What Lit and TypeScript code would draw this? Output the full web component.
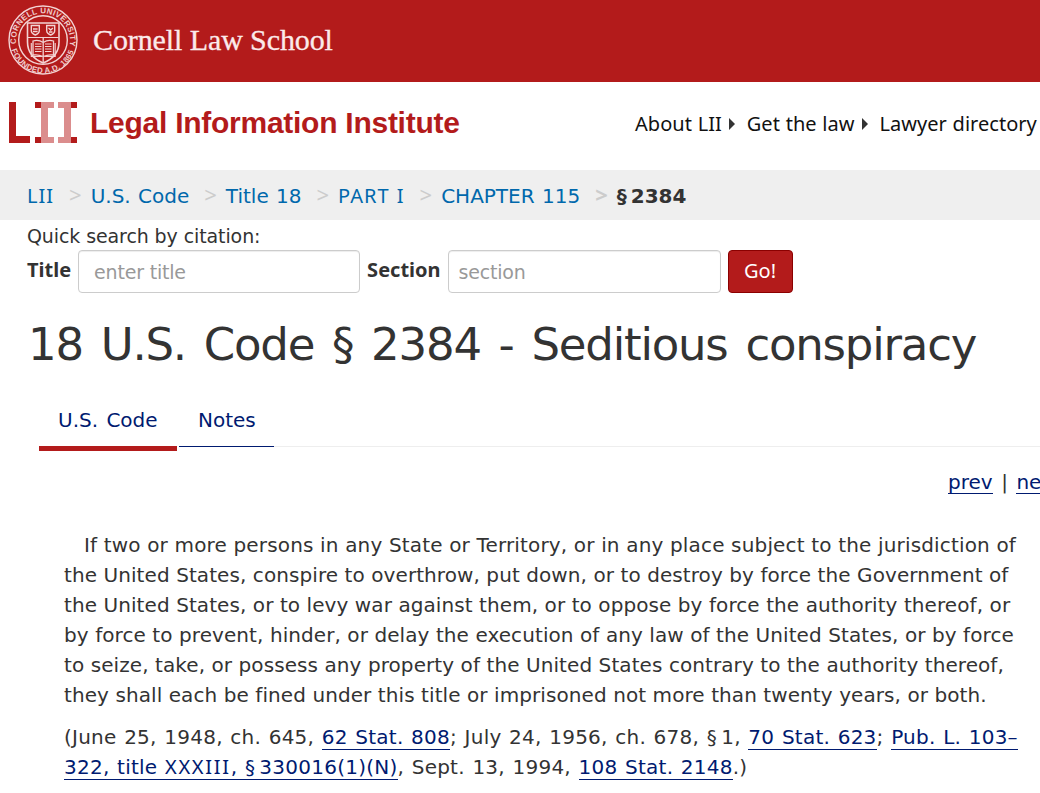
import { LitElement, html, css, svg } from 'lit'
import { customElement, property } from 'lit/decorators.js';

/**
 * @element cornell-seal
 * @summary Round university seal with shield and open book.
 */
@customElement('cornell-seal')
export class CornellSeal extends LitElement {
  static override styles = css`
    :host {
      display: block;
      width: 70px;
      height: 70px;
    }
    svg {
      display: block;
    }
    .line {
      fill: none;
      stroke: #f3d3d3;
    }
    .ring-text {
      fill: #f0cccc;
      font: bold 8px 'Liberation Sans', sans-serif;
    }
  `;

  override render() {
    const rows = [41.5, 44, 46.5, 49];
    return html`
      <svg width="70" height="70" viewBox="0 0 70 70" role="img" aria-label="Cornell University seal">
        <defs>
          <path id="top" d="M8.6 41 A27 27 0 1 1 61.4 41" />
          <path id="bottom" d="M2.5 41 A33 33 0 0 0 67.5 41" />
        </defs>
        <circle class="line" cx="35" cy="35" r="34" stroke-width="1.4" />
        <circle class="line" cx="35" cy="35" r="24.3" stroke-width="1.4" />
        <text class="ring-text"><textPath href="#top" textLength="94" startOffset="2">CORNELL UNIVERSITY</textPath></text>
        <text class="ring-text"><textPath href="#bottom" textLength="82" startOffset="4">FOUNDED A.D. 1865</textPath></text>
        <path class="line" stroke-width="1.6" d="M19.5 18 H51 V37 C51 47 45 54 35.2 58 C25.5 54 19.5 47 19.5 37 Z" />
        <path class="line" stroke-width="1" d="M20 32.5 H50.5" />
        <path class="line" stroke-width="1.4" d="M23.3 20.5 h8 v5 q0 3 -4 4.5 q-4 -1.5 -4 -4.5 z M38.7 20.5 h8 v5 q0 3 -4 4.5 q-4 -1.5 -4 -4.5 z" />
        <path class="line" stroke-width="1.3" d="M25 24 h4.6 M25 26.5 h4.6 M40.5 23 l2.2 2 l2.2 -2 M41 27 h3.5" />
        <path class="line" stroke-width="1.3" d="M35.2 37.5 C31.5 35 28 35 25 36 V50 C29 49.5 32 50 35.2 51.5 C38.5 50 42 49.5 45.5 50 V36 C42 35 39 35 35.2 37.5 Z M35.2 32.5 V57.5" />
        ${rows.map(y => svg`<path class="line" stroke-width="1" d=${`M27 ${y - 2.5} H33.5 M37 ${y - 2.5} H43.5`} />`)}
        <path class="line" stroke-width="1.1" d="M23.3 38 V51.5 H34 M47.2 38 V51.5 H36.5" />
      </svg>
    `;
  }
}

/**
 * @element crumb-trail
 * @summary Breadcrumb bar. The last entry is the current page.
 */
@customElement('crumb-trail')
export class CrumbTrail extends LitElement {
  @property({ attribute: false }) items: string[] = [];
  @property({ type: String }) current = '';

  static override styles = css`
    :host {
      display: block;
      background: #efefef;
    }
    nav {
      display: flex;
      align-items: baseline;
      height: 50px;
      padding: 9px 0 0 27px;
      box-sizing: border-box;
      font: 20px/30px 'DejaVu Sans', sans-serif;
      white-space: nowrap;
    }
    a {
      color: #0068ac;
      text-decoration: none;
      word-spacing: 1px;
    }
    .roman {
      font-family: 'Noto Sans', sans-serif;
      letter-spacing: 1px;
    }
    .sep {
      width: 36.6px;
      padding-left: 15px;
      box-sizing: border-box;
      color: #ccc;
      font-family: 'Noto Sans', sans-serif;
      font-size: 22px;
    }
    .current {
      color: #333;
      font-weight: bold;
      letter-spacing: 0.4px;
    }
    .sep.last {
      font-weight: bold;
    }
  `;

  override render() {
    return html`
      <nav aria-label="Breadcrumb">
        ${this.items.map((item, i) => html`
          <a class=${item.endsWith('I') ? 'roman' : ''} href="#">${item}</a>
          <span class=${i === this.items.length - 1 ? 'sep last' : 'sep'}>&gt;</span>
        `)}
        <span class="current">${this.current}</span>
      </nav>
    `;
  }
}

@customElement('app-root')
export class AppRoot extends LitElement {
  static override styles = css`
    :host {
      display: block;
      height: 793px;
      overflow: hidden;
      background: #fff;
      color: #333;
      font-family: 'DejaVu Sans', sans-serif;
      font-size: 20px;
      line-height: 30px;
    }
    a {
      color: #001a70;
      text-decoration: none;
    }

    /* ── Header ── */
    .school {
      display: flex;
      align-items: center;
      gap: 15px;
      height: 82px;
      padding: 0 8px 2px;
      box-sizing: border-box;
      background: #b31b1b;
    }
    .school-name {
      color: #fbeaea;
      font: 30px/40px 'Liberation Serif', serif;
      letter-spacing: -0.1px;
      white-space: nowrap;
      -webkit-text-stroke: 0.3px #fbeaea;
    }
    .masthead {
      display: flex;
      align-items: center;
      height: 88px;
      padding-left: 9px;
      white-space: nowrap;
    }
    .lii {
      flex: none;
      margin: 0 12px 8px 0;
    }
    .institute {
      width: 370px;
      margin-bottom: 6px;
      color: #b31b1b;
      font: bold 30px/40px 'Liberation Sans', sans-serif;
      letter-spacing: -0.26px;
    }
    .menu {
      display: flex;
      align-items: center;
      margin: 0 0 4px 175px;
      color: #111;
      font-family: 'Noto Sans', sans-serif;
      letter-spacing: 0.03px;
      word-spacing: 0.5px;
    }
    .arrow {
      margin: 0 12px 0 7px;
      border: 6px solid transparent;
      border-left: 6px solid #333;
      border-right: 0;
    }

    /* ── Citation search ── */
    .search {
      padding-left: 27px;
    }
    .hint {
      padding-top: 1px;
      height: 29px;
      font-size: 19px;
      letter-spacing: -0.1px;
    }
    .search-row {
      display: flex;
      height: 43px;
    }
    label {
      padding-top: 4px;
      font-family: 'Noto Sans', sans-serif;
      font-weight: bold;
      line-height: 32px;
    }
    input {
      box-sizing: border-box;
      height: 43px;
      border: 1px solid #ccc;
      border-radius: 4px;
      margin: 0 7px 0 7px;
      font: 19px 'DejaVu Sans', sans-serif;
      letter-spacing: -0.2px;
      box-shadow: inset 0 1px 1px rgba(0, 0, 0, 0.075);
    }
    input::placeholder {
      color: #999;
    }
    .title-input {
      width: 282px;
      padding: 0 15px;
    }
    .section-input {
      width: 273px;
      padding: 0 10px;
    }
    button {
      width: 65px;
      height: 43px;
      padding: 0 0 2px;
      border: 1px solid #8b0000;
      border-radius: 4px;
      background: #b31b1b;
      color: #fff;
      font: 20px 'Noto Sans', sans-serif;
    }

    /* ── Section heading and tabs ── */
    h1 {
      margin: 21px 0 0 28px;
      font-size: 45px;
      font-weight: normal;
      letter-spacing: -1.2px;
      word-spacing: 4.7px;
      line-height: 62px;
      white-space: nowrap;
    }
    .tabs {
      display: flex;
      height: 56px;
      margin: 19px 0 0 39px;
    }
    .tab {
      box-sizing: border-box;
      width: 95px;
      height: 52px;
      padding: 10px 0 0 19px;
      border-bottom: 1px solid #001a70;
      word-spacing: 2px;
    }
    .tab.active {
      width: 138px;
      height: 56px;
      margin-right: 2px;
      border-bottom: 5px solid #b31b1b;
    }
    .tabs-rule {
      flex: 1;
      height: 51px;
      border-bottom: 1px solid #eee;
    }
    .pager {
      display: flex;
      gap: 8.5px;
      margin: 16px 0 0 948px;
      white-space: nowrap;
    }
    .pager a,
    .source a {
      border-bottom: 1px solid #001a70;
    }
    .pager a {
      height: 26px;
    }

    /* ── Statute text ── */
    .statute,
    .source {
      margin: 0 0 0 64px;
      letter-spacing: 0.08px;
      white-space: nowrap;
    }
    .statute {
      margin-top: 33px;
      text-indent: 20px;
    }
    .statute::first-line {
      letter-spacing: 0.16px;
    }
    .source {
      margin-top: 12px;
      letter-spacing: 0.24px;
      word-spacing: 1px;
    }
    .numeral {
      font-family: 'Noto Sans', sans-serif;
      letter-spacing: 1.7px;
      line-height: 1;
    }
  `;

  override render() {
    return html`
      <header>
        <div class="school">
          <cornell-seal></cornell-seal>
          <span class="school-name">Cornell Law School</span>
        </div>
        <div class="masthead">
          <svg class="lii" width="69" height="41" viewBox="0 0 69 41" role="img" aria-label="LII">
            <path fill="#b31b1b" d="M0 0H7V34H21V41H0Z M26 0H32V6H26Z M26 35H32V41H26Z M62 0H68V6H62Z M62 35H68V41H62Z" />
            <path fill="#db8d8d" d="M32 0H45V6H39V35H45V41H32Z M49 0H62V41H49V35H55V6H49Z" />
          </svg>
          <span class="institute">Legal Information Institute</span>
          <nav class="menu">
            <span>About LII</span><i class="arrow"></i>
            <span>Get the law</span><i class="arrow"></i>
            <span>Lawyer directory</span>
          </nav>
        </div>
      </header>
      <crumb-trail
        .items=${['LII', 'U.S. Code', 'Title 18', 'PART I', 'CHAPTER 115']}
        current="§&#8239;2384"
      ></crumb-trail>
      <form class="search" @submit=${(e: Event) => e.preventDefault()}>
        <div class="hint">Quick search by citation:</div>
        <div class="search-row">
          <label for="title">Title</label>
          <input id="title" class="title-input" placeholder="enter title" />
          <label for="section">Section</label>
          <input id="section" class="section-input" placeholder="section" />
          <button type="submit">Go!</button>
        </div>
      </form>
      <main>
        <h1>18 U.S. Code § 2384 - Seditious conspiracy</h1>
        <div class="tabs">
          <a class="tab active" href="#">U.S. Code</a>
          <a class="tab" href="#">Notes</a>
          <span class="tabs-rule"></span>
        </div>
        <div class="pager"><a href="#">prev</a><span>|</span><a href="#">ne</a></div>
        <p class="statute">
          If two or more persons in any State or Territory, or in any place subject to the jurisdiction of<br />
          the United States, conspire to overthrow, put down, or to destroy by force the Government of<br />
          the United States, or to levy war against them, or to oppose by force the authority thereof, or<br />
          by force to prevent, hinder, or delay the execution of any law of the United States, or by force<br />
          to seize, take, or possess any property of the United States contrary to the authority thereof,<br />
          they shall each be fined under this title or imprisoned not more than twenty years, or both.
        </p>
        <p class="source">
          (June 25, 1948, ch. 645, <a href="#">62 Stat. 808</a>; July 24, 1956, ch. 678, §&#8239;1,
          <a href="#">70 Stat. 623</a>; <a href="#">Pub. L. 103–<br />322, title <span class="numeral">XXXIII</span>, §&#8239;330016(1)(N)</a>,
          Sept. 13, 1994, <a href="#">108 Stat. 2148</a>.)
        </p>
      </main>
    `;
  }
}

declare global {
  interface HTMLElementTagNameMap {
    'app-root': AppRoot;
    'cornell-seal': CornellSeal;
    'crumb-trail': CrumbTrail;
  }
}
